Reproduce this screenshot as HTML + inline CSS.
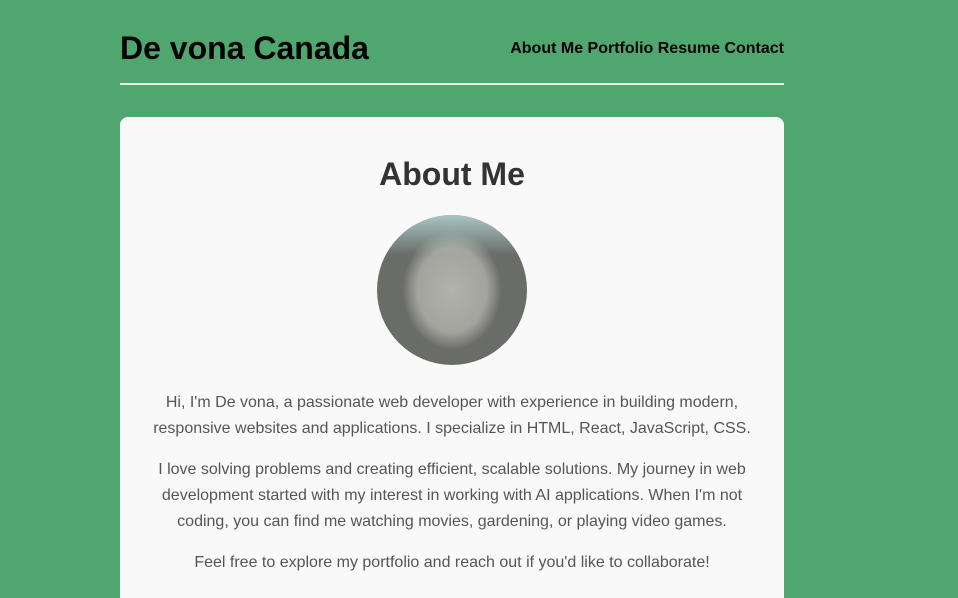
<!DOCTYPE html>
<html><head><meta charset="utf-8"><style>
*{margin:0;padding:0;box-sizing:border-box}
html,body{width:958px;height:598px;overflow:hidden}
body{background:#4fa66f;font-family:"Liberation Sans",Arial,sans-serif}
.wrap{width:664px;margin-left:120px;position:relative;height:598px}
header{height:85px;border-bottom:2px solid #f0f0f0;position:relative}
h1{position:absolute;left:0;top:30px;font-size:32px;font-weight:bold;color:#000;line-height:36px}
nav{position:absolute;right:0;top:40px;font-size:16px;font-weight:bold;color:#000;line-height:18px}
.card{position:absolute;top:117px;left:0;width:664px;height:481px;background:#f9f9f9;border-radius:8px 8px 0 0;text-align:center;color:#555}
h2{position:absolute;top:39px;left:0;width:100%;font-size:32px;color:#333;line-height:36px}
.pic{position:absolute;left:257px;top:98px;width:150px;height:150px;border-radius:50%;
background:radial-gradient(ellipse 33% 40% at 50% 50%,#b2b2ac 0%,#a4a49e 70%,#6a6c68 100%),#5e615d;overflow:hidden}
.pic:before{content:"";position:absolute;left:0;top:0;width:150px;height:40px;background:linear-gradient(#a9c6c4,rgba(120,130,128,0))}
p{font-size:16px;line-height:26px;position:absolute;left:0;width:100%}
</style></head><body>
<div class="wrap">
<header><h1>De vona Canada</h1><nav>About Me Portfolio Resume Contact</nav></header>
<div class="card">
<h2>About Me</h2>
<div class="pic"></div>
<p style="top:273px">Hi, I'm De vona, a passionate web developer with experience in building modern,<br>responsive websites and applications. I specialize in HTML, React, JavaScript, CSS.</p>
<p style="top:340px">I love solving problems and creating efficient, scalable solutions. My journey in web<br>development started with my interest in working with AI applications. When I'm not<br>coding, you can find me watching movies, gardening, or playing video games.</p>
<p style="top:433px">Feel free to explore my portfolio and reach out if you'd like to collaborate!</p>
</div>
</div>
</body></html>
